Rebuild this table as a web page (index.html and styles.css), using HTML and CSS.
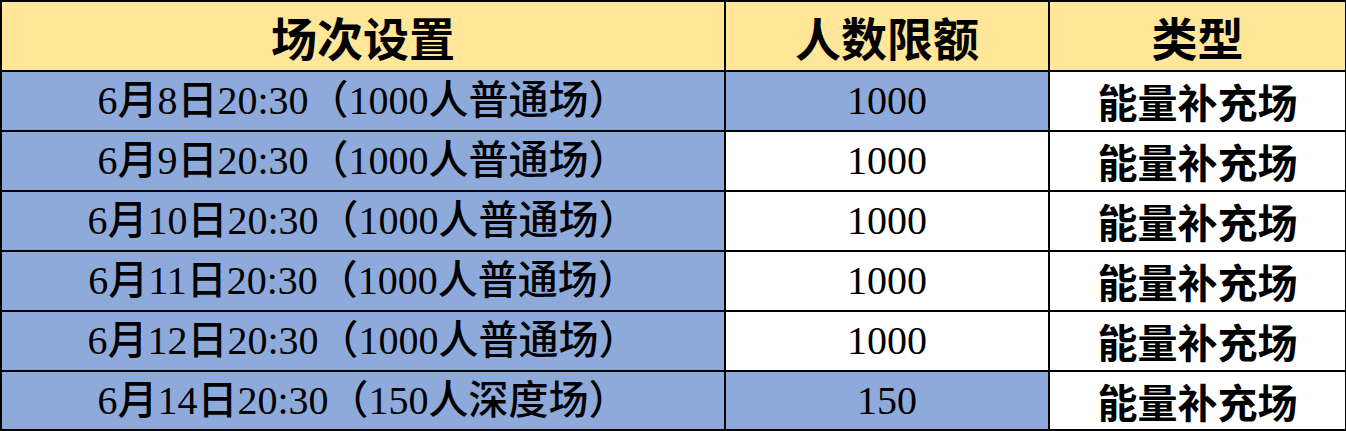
FILE: index.html
```html
<!DOCTYPE html>
<html lang="zh-CN">
<head>
<meta charset="utf-8">
<title>场次设置</title>
<link rel="stylesheet" href="styles.css">
</head>
<body>
<table class="sheet">
  <colgroup>
    <col class="c-session">
    <col class="c-limit">
    <col class="c-type">
  </colgroup>
  <thead>
    <tr class="head">
      <th>场次设置</th>
      <th>人数限额</th>
      <th>类型</th>
    </tr>
  </thead>
  <tbody>
    <tr>
      <td class="session">6月8日20:30（1000人普通场）</td>
      <td class="limit blue">1000</td>
      <td class="kind">能量补充场</td>
    </tr>
    <tr>
      <td class="session">6月9日20:30（1000人普通场）</td>
      <td class="limit">1000</td>
      <td class="kind">能量补充场</td>
    </tr>
    <tr>
      <td class="session">6月10日20:30（1000人普通场）</td>
      <td class="limit">1000</td>
      <td class="kind">能量补充场</td>
    </tr>
    <tr>
      <td class="session">6月11日20:30（1000人普通场）</td>
      <td class="limit">1000</td>
      <td class="kind">能量补充场</td>
    </tr>
    <tr>
      <td class="session">6月12日20:30（1000人普通场）</td>
      <td class="limit">1000</td>
      <td class="kind">能量补充场</td>
    </tr>
    <tr>
      <td class="session">6月14日20:30（150人深度场）</td>
      <td class="limit blue">150</td>
      <td class="kind">能量补充场</td>
    </tr>
  </tbody>
</table>
</body>
</html>
```

FILE: styles.css
```css
html, body {
  margin: 0;
  padding: 0;
  background: #ffffff;
}

.sheet {
  border-collapse: collapse;
  table-layout: fixed;
  width: 1345px;
  font-family: "Liberation Serif", "Noto Sans CJK SC", serif;
  color: #000;
}

.c-session { width: 724px; }
.c-limit { width: 324px; }
.c-type { width: 297px; }

.sheet th,
.sheet td {
  border: 2px solid #000;
  padding: 0;
  text-align: center;
  vertical-align: middle;
  white-space: nowrap;
  overflow: hidden;
}

.head th {
  height: 68px;
  background: #ffe699;
  font-size: 46px;
  font-weight: 700;
}

.sheet tbody td {
  height: 58px;
  font-size: 40px;
  line-height: 1;
}

.sheet tbody tr:last-child td {
  height: 57px;
}

.session {
  background: #8eaadb;
  font-weight: 500;
}

.limit {
  background: #ffffff;
  font-weight: 400;
}

.limit.blue {
  background: #8eaadb;
}

.kind {
  background: #ffffff;
  font-weight: 700;
  font-family: "Noto Sans CJK SC", sans-serif;
}
```
